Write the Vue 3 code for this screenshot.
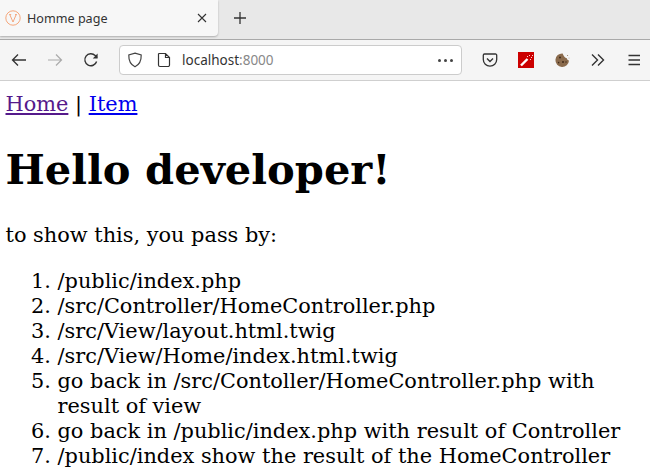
<script setup>
const steps = [
  '/public/index.php',
  '/src/Controller/HomeController.php',
  '/src/View/layout.html.twig',
  '/src/View/Home/index.html.twig',
  'go back in /src/Contoller/HomeController.php with result of view',
  'go back in /public/index.php with result of Controller',
  '/public/index show the result of the HomeController',
]
</script>

<template>
  <div class="browser">
    <div class="tabbar">
      <div class="tab">
        <svg class="favicon" viewBox="0 0 16 16" width="16" height="16">
          <circle cx="8" cy="8" r="7.2" fill="none" stroke="#f5a77c" stroke-width="1" />
          <path d="M4.8 4.6 L8 12 L11.2 4.6 M4.2 4.6 H6.2 M10 4.6 H11.9" fill="none" stroke="#f3925f" stroke-width="0.8" />
        </svg>
        <span class="tab-title">Homme page</span>
        <svg class="tab-close" viewBox="0 0 10 10" width="10" height="10">
          <path d="M1 1 L9 9 M9 1 L1 9" stroke="#333" stroke-width="1.1" />
        </svg>
      </div>
      <svg class="newtab" viewBox="0 0 12 12" width="12" height="12">
        <path d="M6 0 V12 M0 6 H12" stroke="#333" stroke-width="1.3" />
      </svg>
    </div>
    <div class="toolbar">
      <svg class="nav" viewBox="0 0 16 16" width="16" height="16">
        <path d="M15 8 H1.5 M7 2.5 L1.5 8 L7 13.5" fill="none" stroke="#333" stroke-width="1.3" />
      </svg>
      <svg class="nav" viewBox="0 0 16 16" width="16" height="16">
        <path d="M1 8 H14.5 M9 2.5 L14.5 8 L9 13.5" fill="none" stroke="#aaa" stroke-width="1.2" />
      </svg>
      <svg class="nav" viewBox="0 0 16 16" width="16" height="16">
        <path d="M13.6 9.5 A6 6 0 1 1 12.2 3.6 L14 5.6" fill="none" stroke="#333" stroke-width="1.4" />
        <path d="M14.6 1.6 V6.4 H9.8 Z" fill="#333" />
      </svg>
      <div class="urlbar">
        <svg class="shield" viewBox="0 0 16 16" width="16" height="16">
          <path d="M8 1.2 L14.2 3 C14.4 9 12 12.8 8 14.8 C4 12.8 1.6 9 1.8 3 Z" fill="none" stroke="#444" stroke-width="1.2" />
        </svg>
        <svg class="page" viewBox="0 0 14 16" width="14" height="16">
          <path d="M2 1.5 H8.5 L12.5 5.5 V13 A1.5 1.5 0 0 1 11 14.5 H3 A1.5 1.5 0 0 1 1.5 13 V2 Z M8.5 1.5 V5.5 H12.5" fill="none" stroke="#333" stroke-width="1.2" />
        </svg>
        <span class="url">localhost<span class="port">:8000</span></span>
        <span class="dots"><i></i><i></i><i></i></span>
      </div>
      <div class="actions">
        <svg viewBox="0 0 16 16" width="16" height="16">
          <path d="M2.5 2 H13.5 A1.2 1.2 0 0 1 14.7 3.2 V7.5 A6.7 6.7 0 0 1 1.3 7.5 V3.2 A1.2 1.2 0 0 1 2.5 2 Z" fill="none" stroke="#333" stroke-width="1.3" />
          <path d="M5 6.5 L8 9.5 L11 6.5" fill="none" stroke="#333" stroke-width="1.4" />
        </svg>
        <svg viewBox="0 0 16 16" width="16" height="16">
          <rect width="16" height="16" fill="#cc0000" />
          <path d="M3 13.5 L9.5 7" stroke="#fff" stroke-width="2.4" />
          <path d="M11 3 h1 v1 h-1 z M13 5 h1 v1 h-1 z M9 4 h1 v1 h-1 z M12 7 h1 v1 h-1 z M14 3 h1 v1 h-1 z" fill="#ffd0d0" />
        </svg>
        <svg viewBox="0 0 16 16" width="16" height="16">
          <path d="M8.6 1.4 A6.8 6.8 0 1 0 15 8.6 C13.8 8.2 13 7.4 12.8 6.2 C11 6 9.6 4 8.6 1.4 Z" fill="#8a6a4c" />
          <circle cx="6" cy="5.6" r="1" fill="#3f2a18" />
          <circle cx="9" cy="10" r="1" fill="#3f2a18" />
          <circle cx="4.6" cy="10.6" r="0.8" fill="#3f2a18" />
          <circle cx="12" cy="10" r="0.7" fill="#3f2a18" />
          <circle cx="13.6" cy="3.6" r="0.5" fill="#8a6a4c" />
          <circle cx="15" cy="6" r="0.4" fill="#8a6a4c" />
        </svg>
        <svg viewBox="0 0 16 16" width="16" height="16">
          <path d="M2 2.5 L7.5 8 L2 13.5 M8 2.5 L13.5 8 L8 13.5" fill="none" stroke="#333" stroke-width="1.4" />
        </svg>
        <svg viewBox="0 0 16 16" width="16" height="16">
          <path d="M2.5 3.5 H14 M2.5 8 H14 M2.5 12.5 H14" fill="none" stroke="#333" stroke-width="1.3" />
        </svg>
      </div>
    </div>
    <main class="content">
      <p class="links"><a class="visited" href="#">Home</a> | <a href="#">Item</a></p>
      <h1>Hello developer!</h1>
      <p class="intro">to show this, you pass by:</p>
      <ol>
        <li v-for="step in steps" :key="step">{{ step }}</li>
      </ol>
    </main>
  </div>
</template>

<style>
html, body { margin: 0; background: #fff; }
</style>

<style scoped>
.browser { width: 650px; height: 476px; overflow: hidden; display: flex; flex-direction: column; background: #fff; }
.tabbar { height: 39px; background: #e8e8e8; border-bottom: 1px solid #a9a9a9; display: flex; align-items: flex-start; box-sizing: content-box; }
.tab { width: 218px; height: 36px; background: #f7f7f7; border-radius: 0 0 4px 0; box-shadow: 0 1px 2px rgba(0,0,0,.25); display: flex; align-items: center; padding: 0 0 0 5px; box-sizing: border-box; }
.favicon { flex: none; }
.tab-title { margin-left: 6px; font: 12.6px "Noto Sans", sans-serif; color: #333; flex: 1; }
.tab-close { margin-right: 11px; }
.newtab { margin: 12px 0 0 16px; }
.toolbar { height: 40px; background: #f5f5f5; border-bottom: 1px solid #cfcfcf; display: flex; align-items: center; padding-left: 11px; }
.nav { margin-right: 20px; flex: none; }
.urlbar { width: 343px; height: 30px; box-sizing: border-box; background: #fff; border: 1px solid #ccc; border-radius: 4px; display: flex; align-items: center; padding: 0 8px 0 7px; }
.page { margin-left: 14px; }
.url { margin-left: 11px; font: 13.5px "Noto Sans", sans-serif; color: #333; flex: 1; }
.port { color: #888; }
.dots { display: flex; gap: 3px; }
.dots i { width: 3px; height: 3px; border-radius: 50%; background: #444; display: block; }
.actions { display: flex; align-items: center; gap: 20px; margin-left: 20px; }
.content { padding: 0 5.5px; font-family: "DejaVu Serif", serif; font-size: 20.87px; line-height: 25px; color: #000; }
.links { margin: 11px 0 0; }
a { color: #0000ee; }
a.visited { color: #551a8b; }
h1 { font-size: 41.6px; line-height: 50px; font-weight: 700; margin: 28px 0 0; }
.intro { margin: 28px 0 0; }
ol { margin: 21px 0 0; padding-left: 52px; }
</style>
